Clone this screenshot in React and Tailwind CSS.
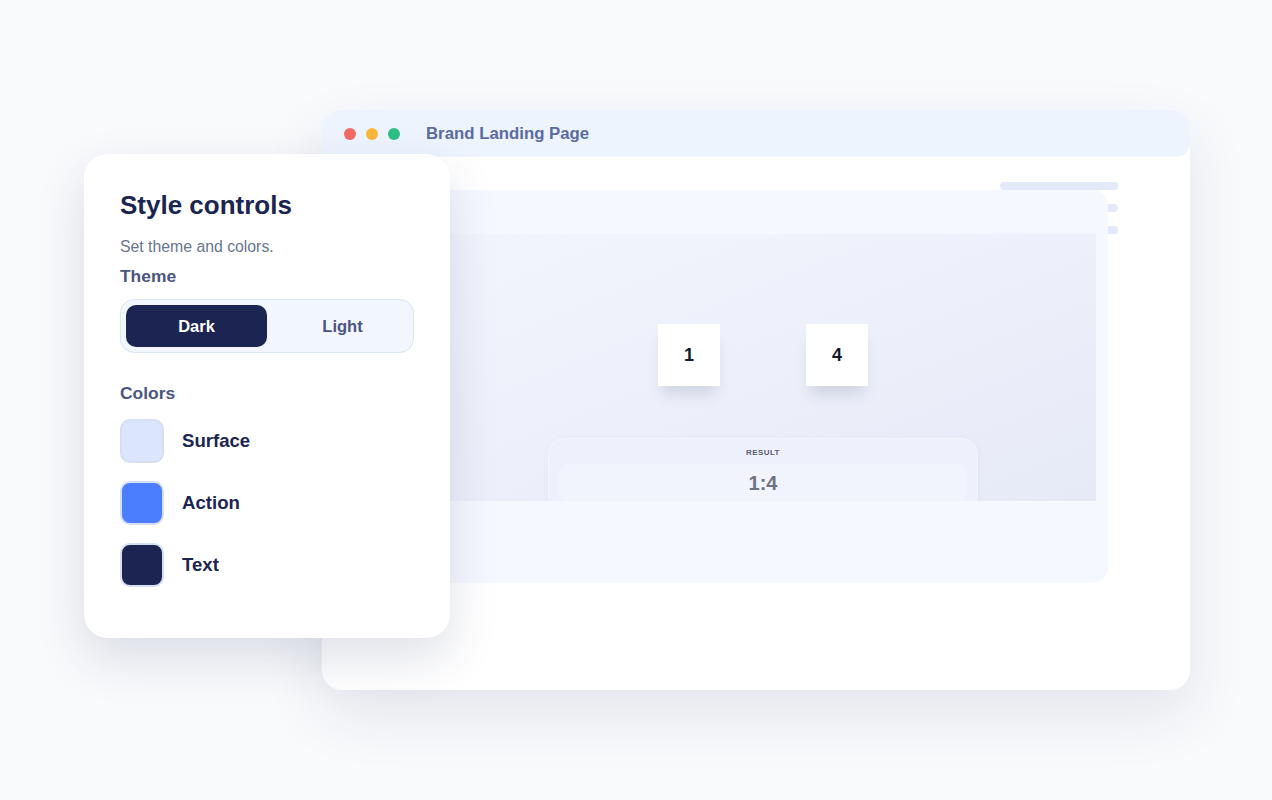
const swatches = [
  { name: 'Surface', color: 'bg-[#dbe6fd]' },
  { name: 'Action', color: 'bg-[#4a7dff]' },
  { name: 'Text', color: 'bg-[#1c2551]' },
];

const BrowserWindow = () => (
  <div className="absolute left-[322px] top-[110px] w-[868px] h-[580px] rounded-[20px] bg-white shadow-[0_24px_60px_rgba(30,40,90,0.10)] flex flex-col">
    {/* Title bar */}
    <div className="h-[47px] rounded-t-[20px] rounded-br-[14px] bg-[#eef4fe] flex items-center pl-[22px] gap-[10px] shrink-0">
      <span className="w-3 h-3 rounded-full bg-[#f26a6a]" />
      <span className="w-3 h-3 rounded-full bg-[#fbb73c]" />
      <span className="w-3 h-3 rounded-full bg-[#2fbf85]" />
      <span className="ml-[16px] text-[16.8px] font-bold text-[#5b6b9e]">Brand Landing Page</span>
    </div>

    <div className="relative flex-1">
      {/* Decorative bars behind panel */}
      <div className="absolute left-[678px] top-[25px] w-[118px] h-2 rounded-full bg-[#e3e9f8]" />
      <div className="absolute left-[740px] top-[47px] w-[56px] h-2 rounded-full bg-[#e3e9f8]" />
      <div className="absolute left-[740px] top-[69px] w-[56px] h-2 rounded-full bg-[#e3e9f8]" />

      {/* Content panel */}
      <div className="absolute left-[96px] top-[33px] w-[690px] h-[393px] rounded-[16px] bg-[#f5f8fe] flex flex-col">
        <div className="h-[44px] shrink-0" />
        <div className="mx-[12px] h-[267px] overflow-hidden bg-gradient-to-br from-[#f2f5fc] via-[#edf0fa] to-[#e6eaf7] flex flex-col items-center">
          <div className="mt-[90px] flex gap-[86px]">
            <div className="w-[62px] h-[62px] bg-white flex items-center justify-center text-[18px] font-bold text-[#141a2e] shadow-[0_12px_14px_-4px_rgba(30,40,80,0.14)]">1</div>
            <div className="w-[62px] h-[62px] bg-white flex items-center justify-center text-[18px] font-bold text-[#141a2e] shadow-[0_12px_14px_-4px_rgba(30,40,80,0.14)]">4</div>
          </div>
          <div className="mt-[52px] w-[430px] h-[80px] rounded-[16px] bg-[#eef1fb] border border-[#f4f6fd] shadow-[0_2px_8px_rgba(30,40,80,0.04)] flex flex-col items-center px-[10px] pt-[8px] pb-[10px]">
            <span className="text-[8px] font-bold tracking-[0.4px] text-[#5c6070] leading-[12px]">RESULT</span>
            <div className="mt-[5px] w-full h-[38px] rounded-[10px] bg-[#f1f4fd] flex items-center justify-center text-[20px] font-bold text-[#6e7282]">1:4</div>
          </div>
        </div>
      </div>
    </div>
  </div>
);

const StyleCard = () => (
  <div className="absolute left-[84px] top-[154px] w-[366px] h-[484px] rounded-[24px] bg-white shadow-[0_20px_50px_rgba(30,40,90,0.14)] px-[36px] pt-[34px] flex flex-col">
    <h2 className="text-[26px] font-bold text-[#1c2551] leading-[34px]">Style controls</h2>
    <p className="mt-[16px] text-[15.8px] text-[#6b7490] leading-[18px]">Set theme and colors.</p>
    <p className="mt-[10px] text-[17.4px] font-bold text-[#4a5580] leading-[20px]">Theme</p>
    <div className="mt-[13px] w-[294px] h-[54px] rounded-[14px] border border-[#dde4f2] bg-[#f2f6fe] p-[5px] flex">
      <div className="w-[141px] rounded-[10px] bg-[#1c2551] text-white text-[16.5px] font-bold flex items-center justify-center">Dark</div>
      <div className="flex-1 pl-[10px] text-[#4a5580] text-[16.5px] font-bold flex items-center justify-center">Light</div>
    </div>
    <p className="mt-[29px] text-[17.4px] font-bold text-[#4a5580] leading-[22px]">Colors</p>
    <div className="mt-[15px] flex flex-col gap-[18px]">
      {swatches.map((s) => (
        <div key={s.name} className="flex items-center gap-[18px]">
          <div className={`w-[44px] h-[44px] rounded-[10px] border-2 border-[#d5def2] ${s.color}`} />
          <span className="text-[18.6px] font-bold text-[#1c2551]">{s.name}</span>
        </div>
      ))}
    </div>
  </div>
);

export default function App() {
  return (
    <div className="w-[1272px] h-[800px] bg-[#f9fafc] relative overflow-hidden font-['Liberation_Sans',Arial,sans-serif]">
      <BrowserWindow />
      <StyleCard />
    </div>
  );
}
